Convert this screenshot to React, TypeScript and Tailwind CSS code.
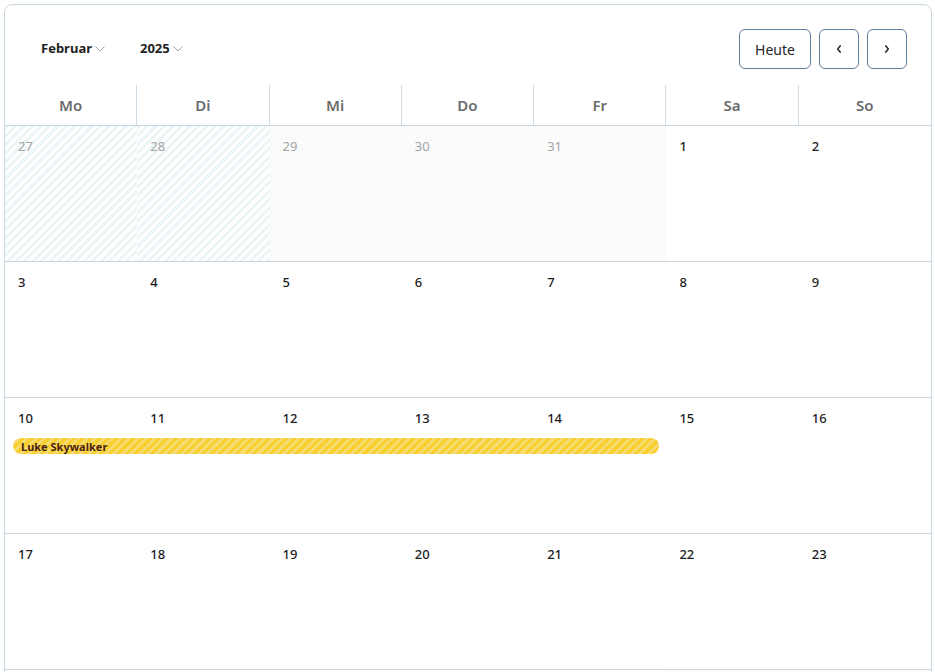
import React from 'react';

type Day = { n: number; kind: 'striped' | 'other' | 'month' };

const weekdays = ['Mo', 'Di', 'Mi', 'Do', 'Fr', 'Sa', 'So'];

const weeks: Day[][] = [
  [
    { n: 27, kind: 'striped' },
    { n: 28, kind: 'striped' },
    { n: 29, kind: 'other' },
    { n: 30, kind: 'other' },
    { n: 31, kind: 'other' },
    { n: 1, kind: 'month' },
    { n: 2, kind: 'month' },
  ],
  [3, 4, 5, 6, 7, 8, 9].map((n) => ({ n, kind: 'month' as const })),
  [10, 11, 12, 13, 14, 15, 16].map((n) => ({ n, kind: 'month' as const })),
  [17, 18, 19, 20, 21, 22, 23].map((n) => ({ n, kind: 'month' as const })),
  [
    ...[24, 25, 26, 27, 28].map((n) => ({ n, kind: 'month' as const })),
    { n: 1, kind: 'other' as const },
    { n: 2, kind: 'other' as const },
  ],
];

const Chevron = () => (
  <svg width="10" height="6" viewBox="0 0 10 6" fill="none">
    <path d="M0.5 0.5L5 5L9.5 0.5" stroke="#9ca3af" strokeWidth="1" />
  </svg>
);

const cellBg = (kind: Day['kind']) => {
  if (kind === 'striped')
    return 'bg-[image:repeating-linear-gradient(135deg,#ecf6f7_0px,#ecf6f7_3px,#ffffff_3px,#ffffff_6px)]';
  if (kind === 'other')
    return 'bg-[#fbfbfb] bg-[image:radial-gradient(#f1f1f1_0.6px,transparent_0.7px)] bg-[size:8px_8px]';
  return 'bg-white';
};

export default function App() {
  return (
    <div className="min-h-screen bg-white pt-1 pl-1 pr-[3px] font-['Noto_Sans',sans-serif]">
      <div className="border border-[#c8d8e3] rounded-lg overflow-hidden bg-white">
        {/* Toolbar */}
        <div className="flex items-center justify-between pt-6 pb-4 pl-9 pr-6">
          <div className="flex items-center gap-[35px]">
            <button className="flex items-center gap-[3px] text-[13px] font-bold text-[#1f1f1f]">
              Februar
              <Chevron />
            </button>
            <button className="flex items-center gap-[3px] text-[13px] font-bold text-[#1f1f1f]">
              2025
              <Chevron />
            </button>
          </div>
          <div className="flex items-center gap-2">
            <button className="h-10 w-[72px] rounded-md border border-[#5f7f9c] text-[14px] text-[#262626]">
              Heute
            </button>
            <button className="h-10 w-10 rounded-md border border-[#5f7f9c] flex items-center justify-center">
              <svg width="8" height="10" viewBox="0 0 8 10" fill="none">
                <path d="M5.3 1.8L2.7 5L5.3 8.2" stroke="#262626" strokeWidth="1.5" strokeLinecap="round" strokeLinejoin="round" />
              </svg>
            </button>
            <button className="h-10 w-10 rounded-md border border-[#5f7f9c] flex items-center justify-center">
              <svg width="8" height="10" viewBox="0 0 8 10" fill="none">
                <path d="M2.7 1.8L5.3 5L2.7 8.2" stroke="#262626" strokeWidth="1.5" strokeLinecap="round" strokeLinejoin="round" />
              </svg>
            </button>
          </div>
        </div>

        {/* Weekday header */}
        <div className="grid grid-cols-7 border-b border-[#c5d4df]">
          {weekdays.map((d, i) => (
            <div
              key={d}
              className={`h-10 flex items-center justify-center text-[15px] font-semibold text-[#6b6b6b] ${
                i < 6 ? 'border-r border-[#cfdce5]' : ''
              }`}
            >
              {d}
            </div>
          ))}
        </div>

        {/* Weeks */}
        {weeks.map((week, wi) => (
          <div
            key={wi}
            className="grid grid-cols-7 grid-rows-[40px_1fr] h-[136px] border-b border-[#c5d4df]"
          >
            {week.map((day, di) => (
              <div
                key={di}
                style={{ gridColumnStart: di + 1 }}
                className={`row-start-1 row-span-2 pl-[13px] pt-[7px] ${cellBg(day.kind)}`}
              >
                <span
                  className={`text-[13px] leading-5 ${
                    day.kind === 'month' ? 'font-medium text-[#1c1c1c]' : 'text-[#a3a3a3]'
                  }`}
                >
                  {day.n}
                </span>
              </div>
            ))}
            {wi === 2 && (
              <div className="row-start-2 col-start-1 col-span-5 self-start ml-2 mr-[7px] h-4 rounded-full bg-[image:repeating-linear-gradient(135deg,#f9cf2c_0px,#f9cf2c_3px,#f6da72_3px,#f6da72_6px)] flex items-center px-2">
                <span className="text-[11px] font-bold text-[#4a230f] leading-none">Luke Skywalker</span>
              </div>
            )}
          </div>
        ))}
      </div>
    </div>
  );
}
